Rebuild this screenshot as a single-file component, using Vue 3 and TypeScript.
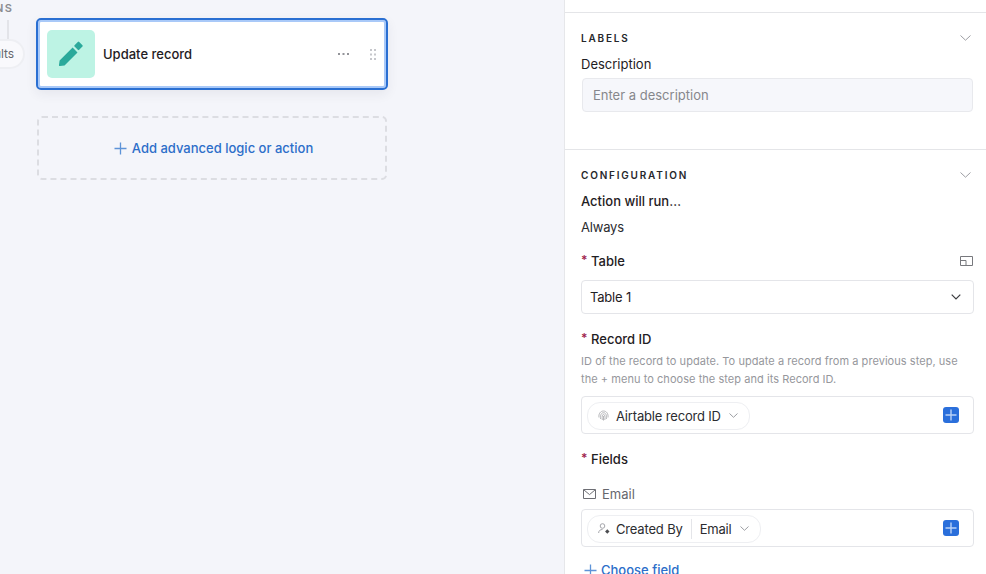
<script setup lang="ts">
const helpText = 'ID of the record to update. To update a record from a previous step, use the + menu to choose the step and its Record ID.'
</script>

<template>
  <div class="page">
    <main class="canvas">
      <span class="group-label">NS</span>
      <span class="connector"></span>
      <span class="results-pill">Results</span>

      <div class="action-card">
        <div class="action-icon">
          <svg width="26" height="26" viewBox="0 0 26 26">
            <path d="M1.6 19.4 14.6 6.6 19.5 11.5 6.5 24.4 1.9 25 C1.2 25 .9 24.6 1 24Z" fill="#2ba99b" />
            <rect x="17.2" y="1.6" width="6.6" height="6.6" rx="1" transform="rotate(45 20.5 4.9)" fill="#2ba99b" />
          </svg>
        </div>
        <span class="action-name">Update record</span>
        <svg class="more" width="11" height="2" viewBox="0 0 11 2"><path d="M0 0h2v2H0zM4.5 0h2v2h-2zM9 0h2v2H9z" fill="#939499" /></svg>
        <svg class="grip" width="6" height="11" viewBox="0 0 6 11"><path d="M0 0h2v2H0zM4 0h2v2H4zM0 4.5h2v2H0zM4 4.5h2v2H4zM0 9h2v2H0zM4 9h2v2H4z" fill="#c6c7cb" /></svg>
      </div>

      <div class="add-logic">
        <svg width="13" height="13" viewBox="0 0 13 13"><path d="M6.5 .5v12M.5 6.5h12" stroke="#5d93d8" stroke-width="1.3" fill="none" /></svg>
        <span>Add advanced logic or action</span>
      </div>
    </main>

    <aside class="panel">
      <section class="section labels">
        <header class="section-head">
          <h2>LABELS</h2>
          <svg class="chev-light" width="11" height="6" viewBox="0 0 11 6"><path d="M.5 .5 5.5 5.2 10.5 .5" /></svg>
        </header>
        <label class="field-title description">Description</label>
        <div class="desc-input">Enter a description</div>
      </section>

      <section class="section config">
        <header class="section-head">
          <h2>CONFIGURATION</h2>
          <svg class="chev-light" width="11" height="6" viewBox="0 0 11 6"><path d="M.5 .5 5.5 5.2 10.5 .5" /></svg>
        </header>
        <div class="field-title run">Action will run…</div>
        <div class="always">Always</div>

        <div class="req-row table-row">
          <span class="star">*</span><span class="field-title">Table</span>
          <svg class="expand" width="13" height="10" viewBox="0 0 13 10" fill="none" stroke="#77787d"><path d="M.5 .5h12v9H.5zM.5 4.5h5.5v5" /></svg>
        </div>
        <div class="select">
          <span class="tight">Table 1</span>
          <svg width="10" height="6" viewBox="0 0 10 6" fill="none" stroke="#3b3c40" stroke-width="1.2"><path d="M.7 .7 5 5 9.3 .7" /></svg>
        </div>

        <div class="req-row record-row">
          <span class="star">*</span><span class="field-title">Record ID</span>
        </div>
        <p class="help">{{ helpText }}</p>
        <div class="token-box">
          <div class="token">
            <svg class="token-icon" width="11" height="11" viewBox="0 0 11 11" fill="none" stroke="#a5a6aa" stroke-width=".8">
              <path d="M1 7.5C.4 3.6 2.6 1 5.5 1s5 2.6 4.5 6.5M2.6 9C2 5 3.4 2.7 5.5 2.7S9 5 8.4 9M4.3 10C3.7 6.5 4.4 4.4 5.5 4.4s2 2.1 1.3 5.6M5.5 6v4.5" />
            </svg>
            <span class="token-text">Airtable record ID</span>
            <svg class="chev-light token-chev" width="9" height="5" viewBox="0 0 9 5"><path d="M.5 .5 4.5 4.3 8.5 .5" /></svg>
          </div>
          <span class="add-btn">
            <svg width="12" height="12" viewBox="0 0 12 12"><path d="M6 .5v11M.5 6h11" stroke="#b9d2f7" stroke-width="1.4" fill="none" /></svg>
          </span>
        </div>

        <div class="req-row fields-row">
          <span class="star">*</span><span class="field-title">Fields</span>
        </div>
        <div class="email-row">
          <svg width="13" height="10" viewBox="0 0 13 10" fill="none" stroke="#6d6e74"><path d="M.5 .5h12v9H.5zM.8 .8 6.5 5.6 12.2 .8" /></svg>
          <span>Email</span>
        </div>
        <div class="token-box">
          <div class="token">
            <svg class="token-icon user-icon" width="12" height="11" viewBox="0 0 12 11" fill="none" stroke="#9a9ba0" stroke-width=".9">
              <circle cx="4.5" cy="3" r="2.3" />
              <path d="M.6 10c.2-2.4 1.6-3.5 3.9-3.5" />
              <path d="M9.3 6.3 11.5 8.5 9.3 10.7 7.1 8.5Z" fill="#4b4c50" stroke="none" />
            </svg>
            <span class="token-text created">Created By</span>
            <span class="token-divider"></span>
            <span class="token-text">Email</span>
            <svg class="chev-light token-chev" width="9" height="5" viewBox="0 0 9 5"><path d="M.5 .5 4.5 4.3 8.5 .5" /></svg>
          </div>
          <span class="add-btn">
            <svg width="12" height="12" viewBox="0 0 12 12"><path d="M6 .5v11M.5 6h11" stroke="#b9d2f7" stroke-width="1.4" fill="none" /></svg>
          </span>
        </div>
        <div class="choose">
          <svg width="13" height="13" viewBox="0 0 13 13"><path d="M6.5 .5v12M.5 6.5h12" stroke="#5d93d8" stroke-width="1.3" fill="none" /></svg>
          <span>Choose field</span>
        </div>
      </section>
    </aside>
  </div>
</template>

<style scoped>
.page {
  display: flex;
  width: 986px;
  height: 574px;
  overflow: hidden;
  font-family: Inter, "Liberation Sans", sans-serif;
  font-size: 13px;
  color: #1f2023;
  background: #f4f5fa;
}

.canvas {
  position: relative;
  box-sizing: border-box;
  width: 564px;
  flex: none;
  padding: 18px 0 0 36px;
}

.group-label {
  position: absolute;
  left: -5px;
  top: 1px;
  font-size: 11px;
  font-weight: 600;
  letter-spacing: 1.5px;
  line-height: 14px;
  color: #8b8c91;
}

.connector {
  position: absolute;
  left: 7px;
  top: 20px;
  width: 2px;
  height: 20px;
  background: #e3e4e9;
}

.results-pill {
  position: absolute;
  left: -41px;
  top: 39px;
  box-sizing: border-box;
  height: 30px;
  padding: 0 9px 0 12px;
  border: 2px solid #eeeff3;
  border-radius: 15px;
  background: #f9f9fc;
  font-size: 12px;
  line-height: 26px;
  color: #66676c;
}

.action-card {
  display: flex;
  align-items: center;
  box-sizing: border-box;
  width: 352px;
  height: 72px;
  padding: 0 10px;
  background: #fff;
  border: 2px solid #2a6fd2;
  border-radius: 5px;
  box-shadow: inset 0 0 0 2px #a9c9f8, 0 4px 12px rgba(40, 45, 70, 0.07);
}

.action-icon {
  display: flex;
  align-items: center;
  justify-content: center;
  flex: none;
  width: 48px;
  height: 48px;
  margin-left: -1px;
  background: #bdf3e4;
  border-radius: 5px;
}

.action-name {
  margin-left: 8px;
  font-weight: 450;
  flex: 1;
}

.more {
  margin-right: 21px;
}

.add-logic {
  display: flex;
  align-items: center;
  justify-content: center;
  gap: 5px;
  box-sizing: border-box;
  width: 350px;
  height: 64px;
  margin: 26px 0 0 1px;
  padding-left: 3px;
  border: 2px dashed #dcdde2;
  border-radius: 5px;
  font-weight: 450;
  color: #2c6ec9;
}

.panel {
  flex: 1;
  background: #fff;
  border-left: 1px solid #e6e7ea;
  padding-top: 12px;
}

.section {
  border-top: 1px solid #e4e5e8;
  padding: 0 12px 0 16px;
}

.labels {
  height: 136px;
}

.section-head {
  display: flex;
  align-items: center;
  justify-content: space-between;
  height: 16px;
  padding-right: 3px;
  margin-top: 17px;
}

.section-head h2 {
  margin: 0;
  font-size: 10px;
  font-weight: 600;
  letter-spacing: 1.8px;
  color: #26272b;
}

.chev-light {
  fill: none;
  stroke: #9d9ea3;
}

.field-title {
  display: block;
  font-weight: 450;
  line-height: 18px;
}

.description {
  margin-top: 9px;
  font-weight: 400;
}

.desc-input {
  box-sizing: border-box;
  height: 34px;
  margin: 5px 1px 0 1px;
  padding-left: 10px;
  background: #f6f7fb;
  border: 1px solid #e8e9ed;
  border-radius: 4px;
  line-height: 32px;
  color: #86878c;
}

.run {
  margin-top: 9px;
}

.always {
  margin-top: 8px;
  line-height: 18px;
  letter-spacing: -0.2px;
  color: #2b2c30;
}

.req-row {
  display: flex;
  align-items: center;
  line-height: 18px;
}

.star {
  width: 10px;
  color: #a11f4f;
  font-size: 12px;
  line-height: 12px;
  font-weight: 600;
  margin-top: -2px;
}

.table-row {
  margin-top: 16px;
}

.expand {
  margin-left: auto;
  margin-right: 1px;
}

.select {
  display: flex;
  align-items: center;
  justify-content: space-between;
  box-sizing: border-box;
  height: 34px;
  margin-top: 10px;
  padding: 0 12px 0 8px;
  border: 1px solid #e4e5e9;
  border-radius: 4px;
}

.tight {
  letter-spacing: -0.2px;
}

.record-row {
  margin-top: 16px;
}

.help {
  margin: 4px 0 0;
  padding-right: 10px;
  font-size: 11px;
  line-height: 18px;
  letter-spacing: 0.05px;
  color: #96979c;
}

.token-box {
  display: flex;
  align-items: center;
  justify-content: space-between;
  box-sizing: border-box;
  height: 38px;
  margin-top: 8px;
  padding: 0 14px 0 5px;
  border: 1px solid #e4e5e9;
  border-radius: 4px;
}

.token {
  display: flex;
  align-items: center;
  height: 26px;
  margin-top: 1px;
  padding: 0 11px 0 10px;
  border: 1px solid #eeeff2;
  border-radius: 13px;
}

.token-icon {
  margin-right: 7px;
}

.user-icon {
  margin-right: 6px;
}

.token-text {
  letter-spacing: -0.17px;
  color: #2b2c30;
}

.created {
  padding-right: 8px;
}

.token-divider {
  width: 1px;
  height: 20px;
  margin-right: 8px;
  background: #e4e5e9;
}

.token-chev {
  margin-left: 8px;
}

.add-btn {
  display: flex;
  align-items: center;
  justify-content: center;
  width: 16px;
  height: 16px;
  margin-top: -1px;
  background: #2a6fdb;
  border-radius: 3px;
}

.fields-row {
  margin-top: 16px;
}

.email-row {
  display: flex;
  align-items: center;
  gap: 6px;
  margin-top: 17px;
  padding-left: 2px;
  line-height: 18px;
  color: #66676d;
}

.email-row + .token-box {
  margin-top: 6px;
}

.choose {
  display: flex;
  align-items: center;
  gap: 4px;
  margin-top: 14px;
  padding-left: 3px;
  line-height: 18px;
  font-weight: 450;
  color: #2c6ec9;
}
</style>

<style>
html, body {
  margin: 0;
  overflow: hidden;
}
</style>
